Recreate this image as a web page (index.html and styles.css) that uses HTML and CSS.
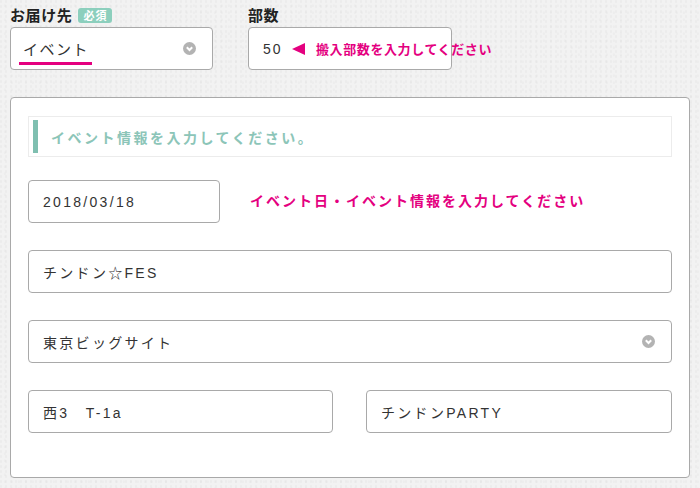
FILE: index.html
```html
<!DOCTYPE html>
<html lang="ja">
<head>
<meta charset="utf-8">
<link rel="stylesheet" href="styles.css">
</head>
<body>
<div class="top">
  <div class="field field-dest">
    <div class="label">お届け先<span class="badge">必須</span></div>
    <div class="box select">
      <span class="value marked">イベント</span>
      <svg class="chev" width="13" height="13" viewBox="0 0 13 13"><circle cx="6.5" cy="6.5" r="6.5" fill="#b3b3b3"/><path d="M3.8 5.3 L6.5 8 L9.2 5.3" fill="none" stroke="#fff" stroke-width="2"/></svg>
    </div>
  </div>
  <div class="field field-qty">
    <div class="label">部数</div>
    <div class="box qty">
      <span class="value">50</span>
      <span class="qty-hint"><span class="tri"></span>搬入部数を入力してください</span>
    </div>
  </div>
</div>

<div class="panel">
  <div class="panel-head">イベント情報を入力してください。</div>
  <div class="date-row">
    <div class="box date"><span class="value">2018/03/18</span></div>
    <div class="hint">イベント日・イベント情報を入力してください</div>
  </div>
  <div class="box full"><span class="value">チンドン☆FES</span></div>
  <div class="box full select">
    <span class="value">東京ビッグサイト</span>
    <svg class="chev" width="13" height="13" viewBox="0 0 13 13"><circle cx="6.5" cy="6.5" r="6.5" fill="#b3b3b3"/><path d="M3.8 5.3 L6.5 8 L9.2 5.3" fill="none" stroke="#fff" stroke-width="2"/></svg>
  </div>
  <div class="pair">
    <div class="box"><span class="value">西3　T-1a</span></div>
    <div class="box"><span class="value">チンドンPARTY</span></div>
  </div>
</div>
</body>
</html>
```

FILE: styles.css
```css
* { box-sizing: border-box; }
html, body { margin: 0; }
body {
  width: 700px;
  height: 488px;
  padding: 5px 10px 0;
  background-color: #f2f2f2;
  background-image:
    radial-gradient(circle at 20% 30%, rgba(0,0,0,0.025) 1px, transparent 1.5px),
    radial-gradient(circle at 70% 80%, rgba(0,0,0,0.02) 1px, transparent 1.5px);
  background-size: 5px 5px, 7px 7px;
  font-family: "Liberation Sans", "Noto Sans CJK JP", sans-serif;
  color: #333;
  overflow: hidden;
}
.top {
  display: flex;
  gap: 35px;
}
.field-dest { width: 203px; }
.field-qty { width: 204px; }
.label {
  font-family: "Noto Sans CJK JP", sans-serif;
  font-weight: bold;
  font-size: 15px;
  line-height: 20px;
  height: 20px;
  margin-bottom: 2px;
  color: #222;
  letter-spacing: 0.6px;
  display: flex;
  align-items: center;
}
.badge {
  display: inline-block;
  margin-left: 6px;
  background: #8ccfbd;
  color: #fff;
  font-size: 11px;
  line-height: 15px;
  height: 15px;
  padding: 0 5px;
  border-radius: 3px;
  letter-spacing: 1px;
}
.box {
  height: 43px;
  border: 1px solid #a9a9a9;
  border-radius: 4px;
  background: #fff;
  display: flex;
  align-items: center;
  padding: 0 14px;
  position: relative;
}
.value {
  font-size: 14px;
  letter-spacing: 2.3px;
  color: #333;
  white-space: nowrap;
}
.select { justify-content: space-between; padding-right: 16px; }
.field-dest .box { padding-left: 12px; }
.field-dest .value { font-size: 15px; letter-spacing: 1.5px; }
.field-qty .value { letter-spacing: 2px; }
.marked { position: relative; }
.marked::after {
  content: "";
  position: absolute;
  left: -4px;
  right: -3px;
  bottom: -6px;
  height: 3px;
  background: #e4007f;
}
.chev { display: block; }
.qty { overflow: visible; }
.qty-hint {
  position: absolute;
  left: 43px;
  top: 11px;
  white-space: nowrap;
  color: #e4007f;
  font-family: "Noto Sans CJK JP", sans-serif;
  font-weight: bold;
  font-size: 13px;
  letter-spacing: 0.6px;
  line-height: 20px;
  display: flex;
  align-items: center;
}
.tri {
  width: 0; height: 0;
  border-top: 6px solid transparent;
  border-bottom: 6px solid transparent;
  border-right: 13px solid #e4007f;
  margin-right: 11px;
}
.panel {
  margin-top: 27px;
  width: 680px;
  height: 381px;
  background: #fff;
  border: 1px solid #a9a9a9;
  border-radius: 4px;
  padding: 18px 17px 0;
  display: flex;
  flex-direction: column;
  gap: 27px;
}
.panel-head {
  height: 41px;
  border: 1px solid #ececec;
  display: flex;
  align-items: center;
  position: relative;
  padding-left: 22px;
  font-family: "Noto Sans CJK JP", sans-serif;
  font-weight: bold;
  font-size: 14px;
  letter-spacing: 2.5px;
  color: #8cc5b8;
  margin-bottom: -4px;
}
.panel-head::before {
  content: "";
  position: absolute;
  left: 4px;
  top: 3px;
  bottom: 3px;
  width: 5px;
  background: #7fbfb0;
}
.date-row {
  display: flex;
  align-items: center;
  gap: 30px;
}
.date { width: 192px; }
.hint {
  color: #e4007f;
  font-family: "Noto Sans CJK JP", sans-serif;
  font-weight: bold;
  font-size: 14px;
  letter-spacing: 2px;
  margin-top: -4px;
}
.pair {
  display: grid;
  grid-template-columns: 305px 306px;
  justify-content: space-between;
}
```
